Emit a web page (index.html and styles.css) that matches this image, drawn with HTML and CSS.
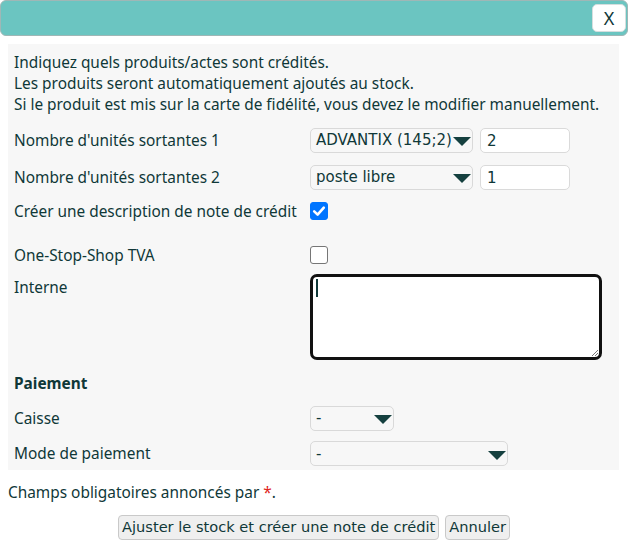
FILE: index.html
```html
<!DOCTYPE html>
<html lang="fr">
<head>
<meta charset="utf-8">
<link rel="stylesheet" href="styles.css">
</head>
<body>
<div class="titlebar">
  <button class="close" type="button">X</button>
</div>
<main class="content">
  <form class="panel">
    <div class="intro">
      <div>Indiquez quels produits/actes sont crédités.</div>
      <div>Les produits seront automatiquement ajoutés au stock.</div>
      <div>Si le produit est mis sur la carte de fidélité, vous devez le modifier manuellement.</div>
    </div>
    <div class="row r1">
      <label class="lbl">Nombre d'unités sortantes 1</label>
      <div class="ctl">
        <div class="sel w163"><span>ADVANTIX (145;2)</span><i class="arrow"></i></div>
        <div class="inp">2</div>
      </div>
    </div>
    <div class="row r2">
      <label class="lbl">Nombre d'unités sortantes 2</label>
      <div class="ctl">
        <div class="sel w163"><span>poste libre</span><i class="arrow"></i></div>
        <div class="inp">1</div>
      </div>
    </div>
    <div class="row r3">
      <label class="lbl">Créer une description de note de crédit</label>
      <div class="ctl"><span class="cb on"><svg viewBox="0 0 18 18" width="18" height="18"><path d="M4.2 9.4 L7.6 12.6 L13.8 5.6" fill="none" stroke="#fff" stroke-width="2.6" stroke-linecap="round" stroke-linejoin="round"/></svg></span></div>
    </div>
    <div class="row r4">
      <label class="lbl">One-Stop-Shop TVA</label>
      <div class="ctl"><span class="cb"></span></div>
    </div>
    <div class="row r5">
      <label class="lbl">Interne</label>
      <div class="ctl"><div class="ta"><span class="caret"></span><svg class="grip" viewBox="0 0 10 10" width="10" height="10"><path d="M9 3 L3 9 M9 6 L6 9" stroke="#777" stroke-width="1"/></svg></div></div>
    </div>
    <div class="section">Paiement</div>
    <div class="row r7">
      <label class="lbl">Caisse</label>
      <div class="ctl"><div class="sel w83"><span>-</span><i class="arrow"></i></div></div>
    </div>
    <div class="row r8">
      <label class="lbl">Mode de paiement</label>
      <div class="ctl"><div class="sel w197"><span>-</span><i class="arrow"></i></div></div>
    </div>
  </form>
  <p class="note">Champs obligatoires annoncés par <span class="req">*</span>.</p>
  <div class="actions">
    <button type="button" class="btn">Ajuster le stock et créer une note de crédit</button>
    <button type="button" class="btn">Annuler</button>
  </div>
</main>
</body>
</html>
```
FILE: styles.css
```css
* { box-sizing: border-box; }
html, body { margin: 0; padding: 0; background: #fff; }
body {
  font-family: "Noto Sans", "Open Sans", sans-serif;
  font-size: 15.4px;
  color: #0f3838;
  width: 628px;
  height: 541px;
  overflow: hidden;
}
.titlebar {
  height: 36px;
  background: #6bc5c1;
  border: 1px solid #9fb7b6;
  border-radius: 6px;
  display: flex;
  justify-content: flex-end;
  align-items: center;
  padding-right: 1px;
}
.close {
  width: 34px;
  height: 28px;
  background: #fff;
  border: 1px solid #d6dede;
  border-radius: 5px;
  font-family: "Noto Sans", sans-serif;
  font-size: 18px;
  color: #0f3838;
  padding: 0;
  line-height: 26px;
}
.content { padding: 8px 8px 0 8px; }
.panel {
  background: #f7f7f7;
  width: 611px;
  padding: 8px 6px 0 6px;
  height: 426px;
}
.intro { line-height: 21px; margin-bottom: 6px; }
.row {
  display: grid;
  grid-template-columns: 296px 1fr;
  align-items: center;
}
.lbl { line-height: 21px; }
.ctl { display: flex; align-items: center; gap: 7px; }
.r1 { height: 38px; }
.r2 { height: 36px; }
.r3 { height: 32px; }
.r4 { height: 32px; margin-top: 12px; }
.r5 { height: 100px; align-items: start; padding-top: 6px; }
.r5 .ctl { margin-top: -3px; }
.section { font-weight: bold; line-height: 21px; margin-top: 2px; height: 26px; }
.r7 { height: 36px; margin-top: 1px; }
.r8 { height: 35px; }
.sel {
  height: 25px;
  border: 1px solid #d9d9d9;
  border-radius: 5px;
  background: #f7f7f7;
  display: flex;
  align-items: center;
  justify-content: space-between;
  padding: 1px 1px 0 5px;
  font-family: "DejaVu Sans", sans-serif;
  font-size: 15px;
  line-height: 1;
  white-space: nowrap;
}
.w163 { width: 163px; }
.w83 { width: 84px; }
.w197 { width: 198px; }
.arrow {
  width: 0; height: 0;
  border-left: 9px solid transparent;
  border-right: 9px solid transparent;
  border-top: 9px solid #15403f;
  margin-top: 2px;
  flex: none;
}
.inp {
  width: 90px;
  height: 25px;
  border: 1px solid #dadada;
  border-radius: 5px;
  background: #fff;
  padding-left: 6px;
  line-height: 24px;
  font-family: "DejaVu Sans", sans-serif;
  font-size: 15px;
}
.cb {
  width: 18px; height: 18px;
  border: 1.5px solid #767676;
  border-radius: 3px;
  background: #fff;
  display: inline-block;
}
.cb.on { background: #0075ff; border-color: #0075ff; }
.cb.on svg { display: block; margin: -1.5px; }
.ta {
  position: relative;
  width: 292px;
  height: 86px;
  border: 3px solid #111;
  border-radius: 7px;
  background: #fff;
}
.caret {
  position: absolute;
  left: 3px; top: 2px;
  width: 2px; height: 18px;
  background: #0f3838;
}
.grip { position: absolute; right: 0; bottom: 0; }
.note { margin: 12px 0 0 0; line-height: 21px; }
.req { color: #e0241b; }
.actions {
  display: flex;
  justify-content: center;
  gap: 6px;
  margin-top: 12px;
}
.btn {
  font-family: "DejaVu Sans", sans-serif;
  font-size: 14.6px;
  color: #0f3838;
  background: #efefef;
  border: 1px solid #c9c9c9;
  border-radius: 4px;
  height: 25px;
  padding: 0 3px;
  line-height: 1;
}
```
